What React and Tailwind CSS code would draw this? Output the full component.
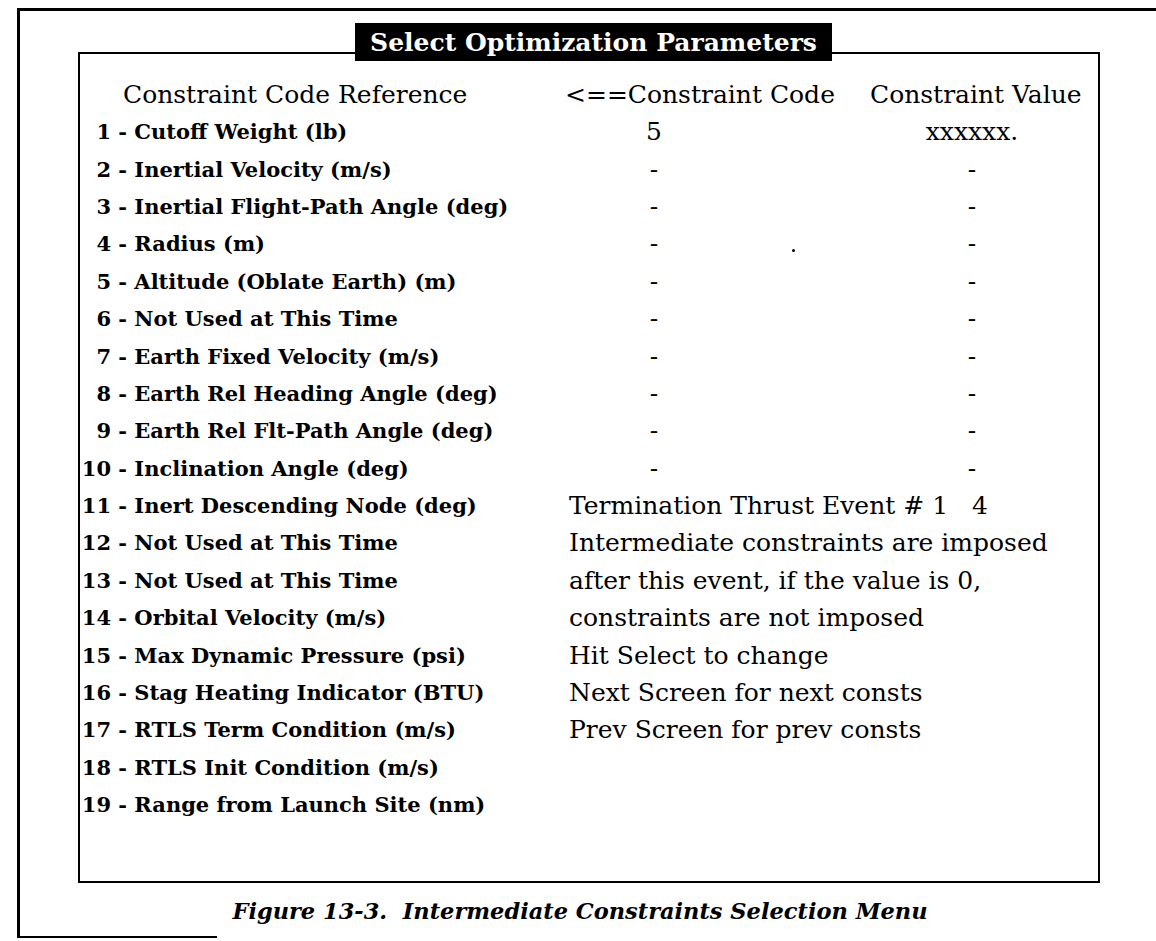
const rows = [
  { n: 1, label: 'Cutoff Weight (lb)', code: '5', value: 'xxxxxx.' },
  { n: 2, label: 'Inertial Velocity (m/s)', code: '-', value: '-' },
  { n: 3, label: 'Inertial Flight-Path Angle (deg)', code: '-', value: '-' },
  { n: 4, label: 'Radius (m)', code: '-', value: '-', dot: true },
  { n: 5, label: 'Altitude (Oblate Earth) (m)', code: '-', value: '-' },
  { n: 6, label: 'Not Used at This Time', code: '-', value: '-' },
  { n: 7, label: 'Earth Fixed Velocity (m/s)', code: '-', value: '-' },
  { n: 8, label: 'Earth Rel Heading Angle (deg)', code: '-', value: '-' },
  { n: 9, label: 'Earth Rel Flt-Path Angle (deg)', code: '-', value: '-' },
  { n: 10, label: 'Inclination Angle (deg)', code: '-', value: '-' },
  { n: 11, label: 'Inert Descending Node (deg)', note: 'Termination Thrust Event # 1\u00a0\u00a0\u00a04' },
  { n: 12, label: 'Not Used at This Time', note: 'Intermediate constraints are imposed' },
  { n: 13, label: 'Not Used at This Time', note: 'after this event, if the value is 0,' },
  { n: 14, label: 'Orbital Velocity (m/s)', note: 'constraints are not imposed' },
  { n: 15, label: 'Max Dynamic Pressure (psi)', note: 'Hit Select to change' },
  { n: 16, label: 'Stag Heating Indicator (BTU)', note: 'Next Screen for next consts' },
  { n: 17, label: 'RTLS Term Condition (m/s)', note: 'Prev Screen for prev consts' },
  { n: 18, label: 'RTLS Init Condition (m/s)' },
  { n: 19, label: 'Range from Launch Site (nm)' },
];

function Row({ r }) {
  return (
    <div className="flex h-[37.4px] items-center">
      <div className="flex w-[489px] shrink-0 text-[21px] font-bold">
        <span className="w-[31px] text-right">{r.n}</span>
        <span className="whitespace-pre"> - {r.label}</span>
      </div>
      {r.note ? (
        <div className="whitespace-pre">{r.note}</div>
      ) : r.code ? (
        <div className="flex">
          <div className="w-[170px] text-center">{r.code}</div>
          <div className="flex w-[109px] items-center justify-center">
            {r.dot && <span className="mt-[14px] h-[3px] w-[3px] rounded-full bg-black" />}
          </div>
          <div className="w-[248px] text-center">{r.value}</div>
        </div>
      ) : null}
    </div>
  );
}

export default function App() {
  return (
    <div
      className="h-[941px] w-[1156px] overflow-hidden bg-white text-black"
      style={{ fontFamily: '"DejaVu Serif", serif' }}
    >
      <div className="ml-[17px] mt-[8px] h-[929px] border-l-[3px] border-t-[3px] border-black pl-[58px] pt-[41px]">
        {/* inner panel */}
        <div className="relative h-[831px] w-[1022px] border-2 border-black text-[25px] leading-none">
          <div className="absolute -top-[31px] left-[275px] flex h-[38px] w-[477px] items-center justify-center bg-black text-[25px] font-bold text-white">
            Select Optimization Parameters
          </div>

          <div className="pt-[22px]">
            <div className="flex h-[37px] items-center">
              <div className="w-[485px] shrink-0 pl-[43px]">Constraint Code Reference</div>
              <div className="w-[305px] shrink-0">&lt;==Constraint Code</div>
              <div className="whitespace-nowrap">Constraint Value</div>
            </div>
            {rows.map((r) => (
              <Row key={r.n} r={r} />
            ))}
          </div>
        </div>

        <div className="mt-[12px] pr-[74px] text-center text-[22.5px] font-bold italic">
          Figure 13-3.&nbsp; Intermediate Constraints Selection Menu
        </div>
      </div>
      <div className="-mt-[1px] ml-[17px] h-[2px] w-[200px] bg-black" />
    </div>
  );
}
